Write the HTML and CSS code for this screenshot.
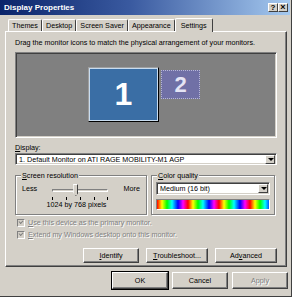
FILE: index.html
```html
<!DOCTYPE html>
<html>
<head>
<meta charset="utf-8">
<link rel="stylesheet" href="styles.css">
</head>
<body>
<div class="window">
  <div class="titlebar">
    <span class="title">Display Properties</span>
    <div class="tbtns">
      <span class="tbtn">?</span><span class="tbtn x">×</span>
    </div>
  </div>
  <div class="tabs">
    <span class="tab">Themes</span><span class="tab">Desktop</span><span class="tab">Screen Saver</span><span class="tab">Appearance</span><span class="tab active">Settings</span>
  </div>
  <div class="panel">
    <p class="hint">Drag the monitor icons to match the physical arrangement of your monitors.</p>
    <div class="canvas">
      <div class="mon mon1">1</div>
      <div class="mon mon2">2</div>
    </div>
    <div class="label"><u>D</u>isplay:</div>
    <div class="select wide">
      <span class="val">1. Default Monitor on ATI RAGE MOBILITY-M1 AGP</span>
      <span class="arrow"></span>
    </div>
    <div class="groups">
      <div class="group res">
        <span class="legend"><u>S</u>creen resolution</span>
        <div class="slider-row">
          <span>Less</span>
          <div class="slider">
            <div class="track"></div>
            <div class="thumb"></div>
            <div class="ticks"><i></i><i></i><i></i><i></i><i></i></div>
          </div>
          <span>More</span>
        </div>
        <div class="reslabel">1024 by 768 pixels</div>
      </div>
      <div class="group color">
        <span class="legend"><u>C</u>olor quality</span>
        <div class="select small">
          <span class="val">Medium (16 bit)</span>
          <span class="arrow"></span>
        </div>
        <div class="spectrum"></div>
      </div>
    </div>
    <div class="check"><span class="box"></span><span><u>U</u>se this device as the primary monitor.</span></div>
    <div class="check"><span class="box"></span><span><u>E</u>xtend my Windows desktop onto this monitor.</span></div>
    <div class="btnrow">
      <span class="btn"><u>I</u>dentify</span>
      <span class="btn"><u>T</u>roubleshoot...</span>
      <span class="btn">Ad<u>v</u>anced</span>
    </div>
  </div>
  <div class="footer">
    <span class="btn big def">OK</span>
    <span class="btn big">Cancel</span>
    <span class="btn big disabled">Apply</span>
  </div>
</div>
</body>
</html>
```
FILE: styles.css
```css
* { box-sizing: border-box; }
html, body { margin: 0; padding: 0; }
body {
  width: 292px; height: 297px; overflow: hidden;
  background: #D4D0C8;
  font-family: "Liberation Sans", Arial, sans-serif;
  font-size: 7.2px;
  color: #000;
}
u { text-decoration: underline; }
.window {
  width: 292px; height: 297px;
  background: #D4D0C8;
  border-right: 1px solid #404040;
  border-bottom: 1px solid #404040;
  display: flex; flex-direction: column;
}
.titlebar {
  height: 15px;
  margin-right: 1px;
  background: linear-gradient(to right, #0A246A 0%, #3a5aa0 45%, #A6CAF0 100%);
  display: flex; align-items: center; justify-content: space-between;
  padding: 0 2px 0 4px;
}
.title { color: #fff; font-weight: bold; font-size: 8px; }
.tbtns { display: flex; gap: 0; }
.tbtn {
  width: 10px; height: 9px;
  background: #D4D0C8;
  border-top: 1px solid #fff; border-left: 1px solid #fff;
  border-right: 1px solid #404040; border-bottom: 1px solid #404040;
  font-size: 8px; font-weight: bold; line-height: 7px; text-align: center;
}
.tbtn.x { font-size: 9px; }
.tabs {
  display: flex; align-items: flex-end;
  margin: 2px 0 0 8px;
  height: 14px;
}
.tab {
  height: 12px;
  padding: 0 3px;
  line-height: 11px;
  border-top: 1px solid #fff; border-left: 1px solid #fff;
  border-right: 1px solid #404040;
  border-radius: 2px 2px 0 0;
}
.tab.active {
  height: 14px;
  margin: 0 -2px -1px 0;
  padding: 0 5px;
  line-height: 13px;
  background: #D4D0C8;
  position: relative; z-index: 1;
}
.panel {
  margin: 0 4px 0 5px;
  height: 236px;
  border-top: 1px solid #fff; border-left: 1px solid #fff;
  border-right: 1px solid #404040; border-bottom: 1px solid #404040;
  box-shadow: inset -1px -1px 0 #808080;
  padding: 6px 9px 0 9px;
}
.hint { margin: 0 0 5px 0; line-height: 9px; white-space: nowrap; }
.canvas {
  position: relative;
  height: 86px;
  background: #808080;
  border-top: 1px solid #808080; border-left: 1px solid #808080;
  border-right: 1px solid #fff; border-bottom: 1px solid #fff;
  box-shadow: inset 1px 1px 0 #404040, inset -1px -1px 0 #D4D0C8;
}
.mon {
  position: absolute;
  display: flex; align-items: center; justify-content: center;
  font-weight: bold;
}
.mon1 {
  left: 72px; top: 14px; width: 71px; height: 55px;
  background: #3A6EA5;
  border: 1px solid #000;
  border-top-color: #A0A0A0; border-left-color: #A0A0A0;
  box-shadow: inset 0 0 0 1px #C8DCF0;
  color: #fff; font-size: 32px;
}
.mon2 {
  left: 145px; top: 17px; width: 39px; height: 29px;
  background: #7070A6;
  border: 1px dotted #B8B8D8;
  color: #E4E4F4; font-size: 22px;
}
.label { margin-top: 6px; line-height: 8px; }
.select {
  display: flex; align-items: center;
  background: #fff;
  border-top: 1px solid #808080; border-left: 1px solid #808080;
  border-right: 1px solid #fff; border-bottom: 1px solid #fff;
  box-shadow: inset 1px 1px 0 #404040, inset -1px -1px 0 #D4D0C8;
  padding: 1px 1px 1px 3px;
}
.select.wide { height: 12px; margin-top: 1px; }
.select.small { height: 13px; }
.select .val { flex: 1; white-space: nowrap; overflow: hidden; }
.arrow {
  width: 10px; height: 9px;
  background: #D4D0C8;
  border-top: 1px solid #fff; border-left: 1px solid #fff;
  border-right: 1px solid #404040; border-bottom: 1px solid #404040;
  position: relative;
}
.arrow::after {
  content: ""; position: absolute; left: 2px; top: 2px;
  border-left: 3px solid transparent; border-right: 3px solid transparent;
  border-top: 3px solid #000;
}
.groups {
  display: flex; gap: 4px;
  margin-top: 10px;
  height: 40px;
}
.group {
  position: relative;
  border: 1px solid #808080;
  box-shadow: 1px 1px 0 #fff, inset 1px 1px 0 #fff;
  padding: 6px 4px 0 5px;
}
.group.res { width: 132px; }
.group.color { width: 124px; padding-left: 4px; }
.legend {
  position: absolute; top: -5px; left: 5px;
  background: #D4D0C8; padding: 0 1px;
  line-height: 9px;
}
.slider-row {
  display: flex; align-items: flex-start; justify-content: space-between;
  padding: 2px 2px 0 1px;
  height: 17px;
}
.slider { position: relative; width: 56px; height: 16px; }
.track {
  position: absolute; left: 0; right: 0; top: 5px; height: 3px;
  border-top: 1px solid #808080; border-left: 1px solid #808080;
  border-bottom: 1px solid #fff; border-right: 1px solid #fff;
}
.thumb {
  position: absolute; left: 21px; top: 0; width: 5px; height: 12px;
  background: #D4D0C8;
  border-top: 1px solid #fff; border-left: 1px solid #fff;
  border-right: 1px solid #404040; border-bottom: 1px solid #404040;
  clip-path: polygon(0 0, 100% 0, 100% 75%, 50% 100%, 0 75%);
}
.ticks {
  position: absolute; left: 0; right: 0; top: 13px; height: 3px;
  display: flex; justify-content: space-between;
}
.ticks i { width: 1px; height: 3px; background: #000; }
.reslabel { text-align: center; line-height: 9px; margin-top: 1px; padding-right: 10px; }
.spectrum {
  margin-top: 4px;
  height: 11px;
  background: repeating-linear-gradient(to right,
    #ff0000 0px, #ffff00 5px, #00ff00 10px, #00ffff 15px, #0000ff 21px, #ff00ff 26px, #ff0000 31px);
  border-top: 1px solid #808080; border-left: 1px solid #808080;
  border-right: 1px solid #fff; border-bottom: 1px solid #fff;
}
.check {
  display: flex; align-items: center; gap: 3px;
  margin-top: 3px; height: 9px;
  color: #808080;
  text-shadow: 1px 1px 0 #fff;
  padding-left: 2px;
}
.check + .check { margin-top: 3px; }
.box {
  width: 8px; height: 8px;
  background: #D4D0C8;
  border-top: 1px solid #808080; border-left: 1px solid #808080;
  border-right: 1px solid #fff; border-bottom: 1px solid #fff;
  position: relative;
}
.box::after {
  content: ""; position: absolute; left: 1px; top: 0px;
  width: 3px; height: 2px;
  border-left: 1px solid #808080; border-bottom: 1px solid #808080;
  transform: rotate(-45deg);
}
.btnrow {
  display: flex; justify-content: flex-end; gap: 7px;
  margin-top: 9px;
  padding-right: 0;
}
.btn {
  display: flex; align-items: center; justify-content: center;
  height: 15px; width: 56px;
  background: #D4D0C8;
  border-top: 1px solid #fff; border-left: 1px solid #fff;
  border-right: 1px solid #404040; border-bottom: 1px solid #404040;
  box-shadow: inset -1px -1px 0 #808080;
}
.btnrow .btn:nth-child(2) { width: 62px; }
.btnrow .btn:nth-child(3) { width: 62px; }
.footer {
  display: flex; justify-content: flex-end; gap: 4px;
  margin-top: 5px; padding-right: 3px;
}
.btn.big { width: 56px; height: 17px; }
.btn.def { outline: 1px solid #000; outline-offset: 0; }
.btn.disabled { color: #808080; text-shadow: 1px 1px 0 #fff; }
```
